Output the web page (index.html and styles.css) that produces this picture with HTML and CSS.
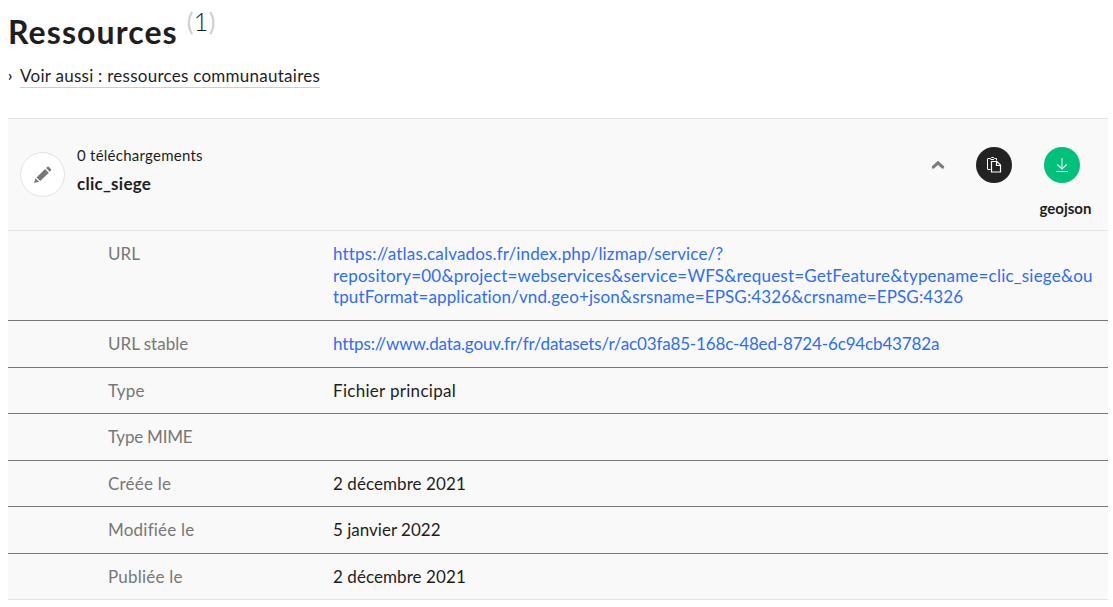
FILE: index.html
```html
<!DOCTYPE html>
<html lang="fr">
<head>
<meta charset="utf-8">
<title>Ressources</title>
<link rel="stylesheet" href="styles.css">
</head>
<body>
<h1 class="title"><span class="title-text">Ressources</span><span class="count"><span class="paren">(</span>1<span class="paren">)</span></span></h1>
<p class="see-also"><span class="chevron">›</span><a class="see-link">Voir aussi : ressources communautaires</a></p>
<section class="card">
  <header class="card-header">
    <span class="edit"><svg width="22" height="22" viewBox="0 0 22 22"><path fill="#777" d="M2 19 3.500 14.300 7 17.700zM4.500 13.400 13.100 5.100 16.800 8.700 8.200 17zM14.100 4.100 15.500 2.800Q16.200 2.300 16.900 2.900L18.900 4.900Q19.500 5.700 18.900 6.400L17.700 7.700z"/></svg></span>
    <div class="info">
      <span class="downloads">0 téléchargements</span>
      <strong class="name">clic_siege</strong>
    </div>
    <svg class="collapse" width="14" height="10" viewBox="0 0 14 10"><path fill="none" stroke="#7b7b7b" stroke-width="3" stroke-linecap="round" stroke-linejoin="miter" d="M2.300 7.200 7 2.800 11.700 7.200"/></svg>
    <span class="button copy"><svg width="16" height="18" viewBox="0 0 16 18" fill="none" stroke="#fff"><path d="M4.500 13.500H2Q1.500 13.500 1.500 13V3Q1.500 2.500 2 2.500H4.500L5.500 1.500H7.500L8.500 2.500H10.500V4.500M4.500 3.500H8"/><path stroke-width="1.200" d="M5.500 5.500H11L14.500 9V16H5.500zM10.500 5.500V9.500H14.500"/></svg></span>
    <div class="download">
      <span class="button get"><svg width="14" height="16" viewBox="0 0 14 16" fill="none" stroke="#fff"><path stroke-width="1.300" stroke-opacity=".7" d="M7 1V12"/><path stroke-width="1.200" d="M2.300 7.500 7 12 11.700 7.500M1 14.500H13"/></svg></span>
      <strong class="format">geojson</strong>
    </div>
  </header>
  <dl class="details">
    <div class="row"><dt>URL</dt><dd class="link"><span class="host">https://atlas.calvados.fr/index.php/lizmap/service/?</span><br><span class="query">repository=00&amp;project=webservices&amp;service=WFS&amp;request=GetFeature&amp;typename=clic_siege&amp;ou</span><br><span class="query-end">tputFormat=application/vnd.geo+json&amp;srsname=EPSG:4326&amp;crsname=EPSG:4326</span></dd></div>
    <div class="row stable"><dt>URL stable</dt><dd class="link permalink">https://www.data.gouv.fr/fr/datasets/r/ac03fa85-168c-48ed-8724-6c94cb43782a</dd></div>
    <div class="row type"><dt class="label-wide">Type</dt><dd class="kind">Fichier principal</dd></div>
    <div class="row"><dt class="label-mime">Type MIME</dt><dd></dd></div>
    <div class="row"><dt class="label-wide">Créée le</dt><dd class="date">2 décembre 2021</dd></div>
    <div class="row"><dt class="label-wide">Modifiée le</dt><dd>5 janvier 2022</dd></div>
    <div class="row"><dt class="label-wide">Publiée le</dt><dd class="date">2 décembre 2021</dd></div>
  </dl>
</section>
</body>
</html>
```
FILE: styles.css
```css
* { box-sizing: border-box; }
body { margin: 0; padding: 0 5px 0 8px; background: #fff; color: #1e1e1e; font: 17px/21.6px Lato, sans-serif; font-variant-ligatures: none; }
.title { display: flex; height: 64px; margin: 0; font-size: 32px; line-height: 40px; font-weight: 700; }
.title-text { padding-top: 12px; letter-spacing: 1.08px; }
.count { padding: 1px 0 0 9px; font-size: 25px; font-weight: 300; letter-spacing: .4px; }
.paren { color: #cecece; font-weight: 400; }
.see-also { display: flex; height: 54px; margin: 0; }
.chevron { width: 12px; padding-top: 1px; font-size: 15px; font-weight: 700; }
.see-link { width: 300px; height: 24px; padding-top: 1px; border-bottom: 1px solid #cecece; white-space: nowrap; letter-spacing: .26px; }
.card { border: solid #e3e3e3; border-width: 1px 0; background: #f9f9f9; }
.card-header { display: flex; height: 112px; border-bottom: 1px solid #e3e3e3; }
.edit { display: flex; align-items: center; justify-content: center; width: 45px; height: 45px; margin: 33px 0 0 12px; border: 1px solid #e3e3e3; border-radius: 50%; background: #fff; }
.info { display: flex; flex-direction: column; flex: 1; padding: 26px 0 0 12px; }
.downloads { font-size: 15px; letter-spacing: .25px; }
.name { margin-top: 6px; letter-spacing: .25px; }
.collapse { margin-top: 41px; }
.button { display: flex; align-items: center; justify-content: center; width: 36px; height: 36px; border-radius: 50%; }
.copy { margin: 28px 21px 0 31px; background: #222; }
.download { display: flex; flex-direction: column; align-items: center; width: 62px; margin-right: 13px; padding: 28px 5px 0 0; }
.get { background: #00c17c; }
.format { margin: 15px -4px 0 4px; font-size: 15px; }
.details { margin: 0; }
.row { display: flex; padding: 12px 0 12px 100px; border-bottom: 1px solid #777; min-height: 46.6px; }
.stable { padding-bottom: 12.4px; }
.type { padding-bottom: 11.6px; min-height: 46.2px; }
.row:last-child { border-bottom: 0; min-height: 45.4px; padding-bottom: 11.6px; }
dt { width: 225px; flex: none; color: #777; }
dd { margin: 0; white-space: nowrap; }
.label-wide { letter-spacing: .22px; }
.label-mime { letter-spacing: -.22px; }
.link { color: #2c6dff; }
.host { letter-spacing: .16px; }
.query { letter-spacing: .21px; }
.query-end { letter-spacing: .12px; }
.permalink { letter-spacing: -.15px; }
.kind { letter-spacing: .3px; }
.date { letter-spacing: .07px; }
```
